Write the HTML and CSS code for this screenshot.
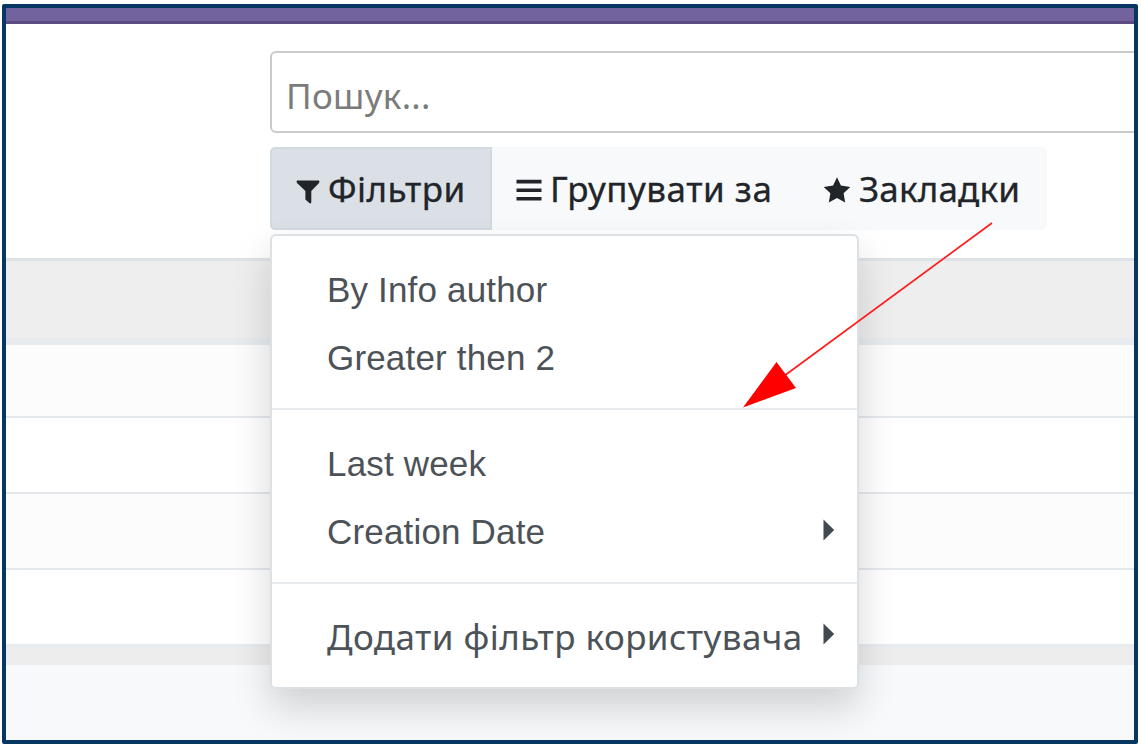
FILE: index.html
```html
<!DOCTYPE html>
<html lang="uk">
<head>
<meta charset="utf-8">
<title>Фільтри</title>
<link rel="stylesheet" href="styles.css">
</head>
<body>
<div class="frame">
  <header class="navbar"></header>
  <section class="control-panel">
    <div class="search"><span class="t-search">Пошук...</span></div>
    <div class="toolbar">
      <div class="btn btn-active">
        <svg class="icon funnel" width="24" height="24" viewBox="0 0 24 24"><path d="M1 0.5H23Q24 2 23 3L15.3 11V22.5Q14.6 24 13.3 23.1L9.4 19.4V11L1 3Q0 1.5 1 .5Z"/></svg>
        <span class="t-filters">Фільтри</span>
      </div>
      <div class="btn btn-group">
        <svg class="icon bars" width="26" height="23" viewBox="0 0 26 23"><path d="M.5 .8H25.5V4.4H.5ZM.5 9.4H25.5V13H.5ZM.5 18H25.5V21.6H.5Z"/></svg>
        <span class="t-group">Групувати за</span>
      </div>
      <div class="btn btn-fav">
        <svg class="icon star" width="28" height="26" viewBox="0 0 28 26"><path d="M14 .3L17.9 8.6L27.3 9.9L20.6 16.3L22.2 25.4L14 21L5.8 25.4L7.4 16.3L.7 9.9L10.1 8.6Z"/></svg>
        <span class="t-fav">Закладки</span>
      </div>
    </div>
  </section>
  <main class="list">
    <div class="list-head"></div>
    <div class="row odd"></div>
    <div class="row"></div>
    <div class="row odd"></div>
    <div class="row last"></div>
    <div class="list-foot"></div>
  </main>
  <div class="menu">
    <div class="item"><span class="t-latin">By Info author</span></div>
    <div class="item"><span class="t-latin">Greater then 2</span></div>
    <div class="divider"></div>
    <div class="item"><span class="t-latin">Last week</span></div>
    <div class="item"><span class="t-latin">Creation Date</span><svg class="caret" width="12" height="22" viewBox="0 0 12 22"><path d="M.5.5L11.2 11L.5 21.5Z"/></svg></div>
    <div class="divider"></div>
    <div class="item item-custom"><span class="t-custom">Додати фільтр користувача</span><svg class="caret" width="12" height="22" viewBox="0 0 12 22"><path d="M.5.5L11.2 11L.5 21.5Z"/></svg></div>
  </div>
  <svg class="arrow" width="252" height="188" viewBox="742 221 252 188"><path class="shaft" d="M992 223L784 376"/><path class="tip" d="M743 407.5L776.5 362L796 388Z"/></svg>
</div>
</body>
</html>
```
FILE: styles.css
```css
* { box-sizing: border-box; }
body {
  margin: 0;
  padding: 4px 3px 5px 2px;
  height: 749px;
  background: #fff;
  overflow: hidden;
  font: 35px/68px "Noto Sans", sans-serif;
  color: #212529;
}
.frame {
  position: relative;
  width: 1136px;
  height: 740px;
  border: 4px solid #063763;
  border-radius: 2px;
  overflow: hidden;
  background: #f8f9fb;
  display: flex;
  flex-direction: column;
}
.navbar {
  height: 16px;
  flex: none;
  background: #72639e;
  border-bottom: 3px solid #5c4c82;
}
.control-panel {
  height: 234px;
  flex: none;
  background: #fff;
  padding: 27px 0 0 264px;
}
.search {
  width: 900px;
  height: 82px;
  border: 2px solid #cbcbcb;
  border-radius: 6px;
  padding: 9px 0 0 14px;
  color: #7b7b7b;
}
.toolbar { display: flex; margin-top: 14px; height: 83px; }
.btn {
  display: flex;
  align-items: center;
  background: #f8f9fb;
  white-space: nowrap;
  -webkit-text-stroke: .3px #212529;
}
.btn-active {
  width: 222px;
  background: #dae0e6;
  border: 2px solid #d2d9df;
  border-radius: 5px 0 0 5px;
  padding-left: 24px;
}
.btn-group { width: 307px; padding-left: 24px; }
.btn-fav { width: 248px; padding-left: 24px; border-radius: 0 5px 5px 0; }
.icon { fill: #212529; flex: none; }
.funnel { margin: 6px 8px 0 0; }
.bars { margin: 4px 8px 0 0; }
.star { margin: 2px 8px 0 0; }
.t-search { letter-spacing: .3px; }
.t-filters { letter-spacing: .45px; }
.t-group { letter-spacing: .5px; }
.t-fav { letter-spacing: .15px; }
.list { flex: none; }
.list-head {
  height: 87px;
  background: #eee;
  border-top: 3px solid #dee2e6;
  border-bottom: 7px solid #e7ebee;
}
.row { height: 76px; background: #fff; border-bottom: 2px solid #e4e7eb; }
.row.odd { background: #fcfcfc; }
.list-head + .row { height: 73px; }
.row.last { height: 77px; border-bottom: 3px solid #e8ebee; }
.list-foot { height: 18px; background: #ededed; }
.menu {
  position: absolute;
  left: 264px;
  top: 226px;
  width: 589px;
  height: 455px;
  border: 2px solid #dce1e6;
  border-radius: 6px;
  background: #fff;
  color: #4c5258;
  padding-top: 20px;
  box-shadow: 0 19px 38px rgba(0, 0, 0, .16);
}
.item {
  height: 68px;
  padding: 0 22px 0 55px;
  display: flex;
  align-items: center;
  justify-content: space-between;
  white-space: nowrap;
}
.item-custom { margin-top: -1px; }
.item-custom .caret { margin-bottom: 6px; }
.divider { height: 2px; margin: 16px 0 20px; background: #e9ecef; }
.caret { fill: #41484f; margin-bottom: 4px; flex: none; }
.t-latin { font-family: "Liberation Sans", sans-serif; letter-spacing: .17px; }
.t-custom { letter-spacing: .44px; }
.arrow { position: absolute; left: 736px; top: 213px; }
.shaft { stroke: #ff1c1c; stroke-width: 1.7; fill: none; }
.tip { fill: #f00; }
```
